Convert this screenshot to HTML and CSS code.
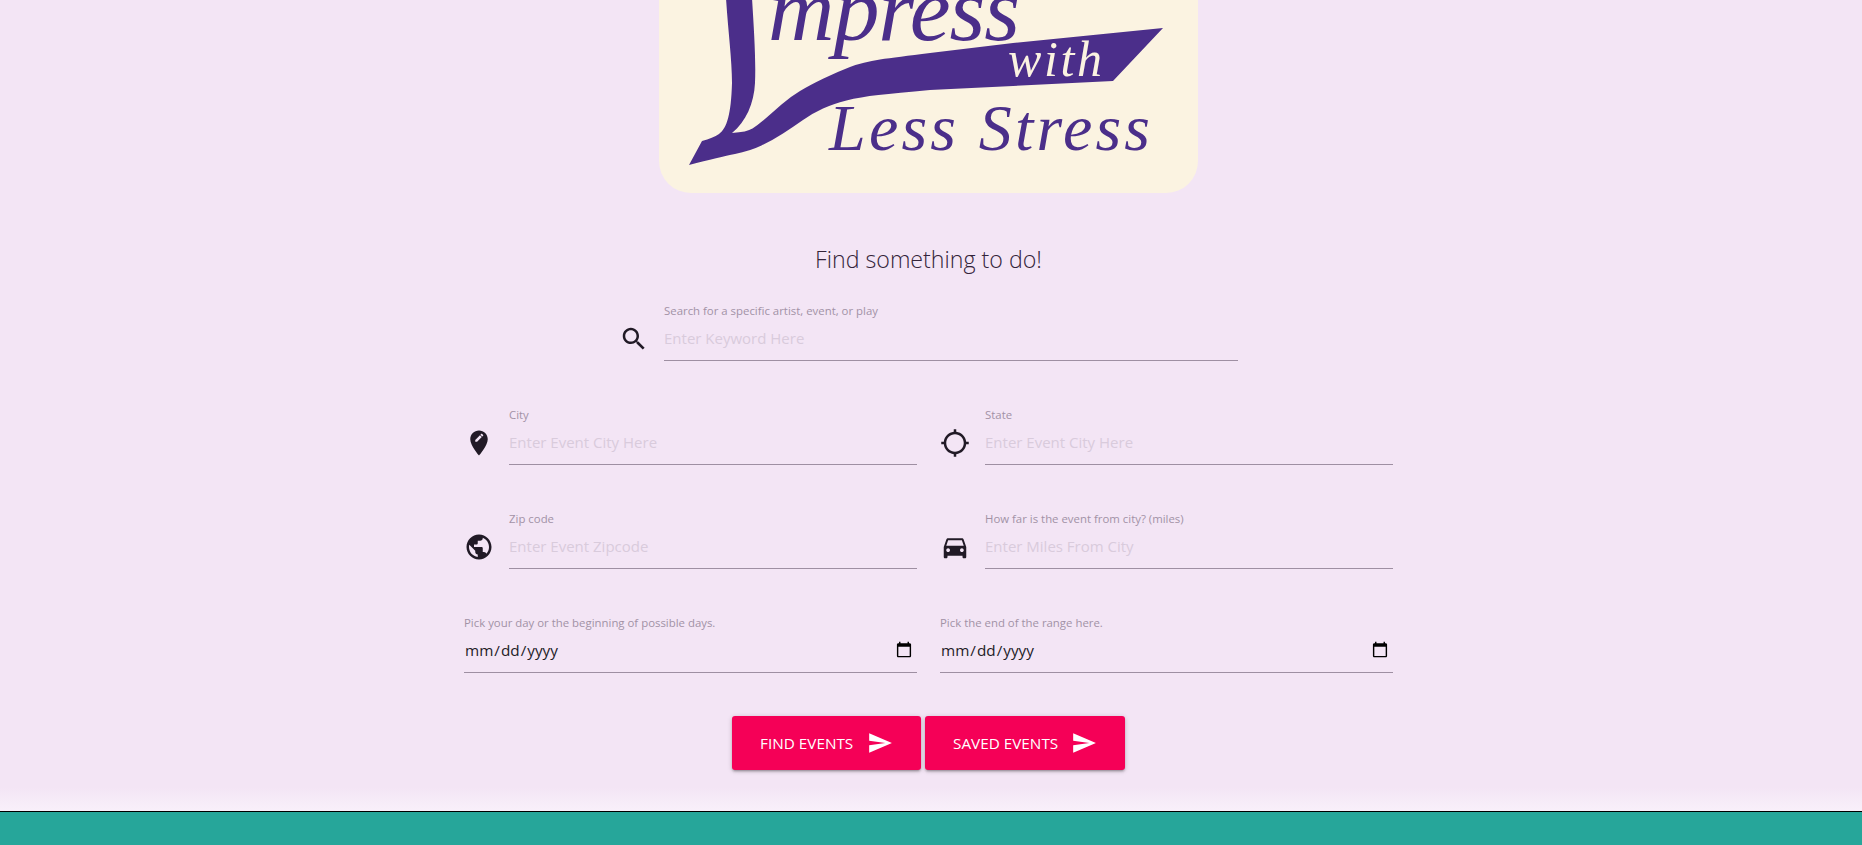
FILE: index.html
```html
<!DOCTYPE html>
<html lang="en">
<head>
<meta charset="utf-8">
<title>Impress with Less Stress</title>
<link rel="stylesheet" href="styles.css">
</head>
<body>
<main class="page">
  <div class="logo">
    <svg class="logo-art" viewBox="0 0 539 193" aria-label="Impress with Less Stress">
      <path class="ink" d="M67 -2 L93 -2 C95 30 97 60 96 83 C95 103 87 122 73 133 Q88 132 93.5 128.5 Q99 125 106.5 118.5 Q114 112 122.5 104.5 Q131 97 141 91 Q151 85 164.5 78.5 Q178 72 191 67 Q204 62 221 59.5 Q238 57 271 53 L354 43 L504 28 L454 81 L354 86 L271 90 Q238 93 219.5 95 Q201 97 187.5 100.5 Q174 104 164 108.5 Q154 113 144 120 Q134 127 124 133.5 Q114 140 102.5 145.5 Q91 151 76 154 Q61 157 30 165 L43 141 Q54 138 60 134 C68 128 72 115 73 83 C73 60 69 30 67 -2 Z"/>
      <text class="logo-text mpress" x="109" y="40" textLength="252">mpress</text>
      <text class="logo-text with" x="349" y="76" textLength="94">with</text>
      <text class="logo-text less" x="170" y="150" textLength="321">Less Stress</text>
    </svg>
  </div>

  <h1 class="title">Find something to do!</h1>

  <form class="form">
    <div class="field field-search">
      <svg class="icon" viewBox="0 0 24 24"><path d="M15.5 14h-.79l-.28-.27C15.41 12.59 16 11.11 16 9.5 16 5.91 13.09 3 9.5 3S3 5.91 3 9.5 5.91 16 9.5 16c1.61 0 3.09-.59 4.23-1.57l.27.28v.79l5 4.99L20.49 19l-4.99-5zm-6 0C7.01 14 5 11.99 5 9.5S7.01 5 9.5 5 14 7.01 14 9.5 11.99 14 9.5 14z"/></svg>
      <label class="control"><span class="label">Search for a specific artist, event, or play</span><input class="input" type="text" placeholder="Enter Keyword Here"></label>
    </div>

    <div class="grid">
      <div class="field">
        <svg class="icon" viewBox="0 0 24 24"><path d="M12 2C8.14 2 5 5.14 5 9c0 5.25 7 13 7 13s7-7.75 7-13c0-3.86-3.14-7-7-7zm-1.53 9H9v-1.47l3.76-3.75 1.47 1.47L10.47 11zm4.85-4.84-.71.71-1.47-1.47.71-.71c.15-.15.39-.15.54 0l.93.93c.15.15.15.39 0 .54z"/></svg>
        <label class="control"><span class="label">City</span><input class="input" type="text" placeholder="Enter Event City Here"></label>
      </div>
      <div class="field">
        <svg class="icon" viewBox="0 0 24 24"><path d="M20.94 11c-.46-4.17-3.77-7.48-7.94-7.94V1h-2v2.06C6.83 3.52 3.52 6.83 3.06 11H1v2h2.06c.46 4.17 3.77 7.48 7.94 7.94V23h2v-2.06c4.17-.46 7.48-3.77 7.94-7.94H23v-2h-2.06zM12 19c-3.87 0-7-3.13-7-7s3.13-7 7-7 7 3.13 7 7-3.13 7-7 7z"/></svg>
        <label class="control"><span class="label">State</span><input class="input" type="text" placeholder="Enter Event City Here"></label>
      </div>
      <div class="field">
        <svg class="icon" viewBox="0 0 24 24"><path d="M12 2C6.48 2 2 6.48 2 12s4.48 10 10 10 10-4.48 10-10S17.52 2 12 2zm-1 17.93c-3.95-.49-7-3.85-7-7.93 0-.62.08-1.21.21-1.79L9 15v1c0 1.1.9 2 2 2v1.93zm6.9-2.54c-.26-.81-1-1.39-1.9-1.39h-1v-3c0-.55-.45-1-1-1H8v-2h2c.55 0 1-.45 1-1V7h2c1.1 0 2-.9 2-2v-.41c2.93 1.19 5 4.06 5 7.41 0 2.08-.8 3.97-2.1 5.39z"/></svg>
        <label class="control"><span class="label">Zip code</span><input class="input" type="text" placeholder="Enter Event Zipcode"></label>
      </div>
      <div class="field">
        <svg class="icon" viewBox="0 0 24 24"><path d="M18.92 6.01C18.72 5.42 18.16 5 17.5 5h-11c-.66 0-1.21.42-1.42 1.01L3 12v8c0 .55.45 1 1 1h1c.55 0 1-.45 1-1v-1h12v1c0 .55.45 1 1 1h1c.55 0 1-.45 1-1v-8l-2.08-5.99zM6.5 16c-.83 0-1.5-.67-1.5-1.5S5.67 13 6.5 13s1.5.67 1.5 1.5S7.33 16 6.5 16zm11 0c-.83 0-1.5-.67-1.5-1.5s.67-1.5 1.5-1.5 1.5.67 1.5 1.5-.67 1.5-1.5 1.5zM5 11l1.5-4.5h11L19 11H5z"/></svg>
        <label class="control"><span class="label">How far is the event from city? (miles)</span><input class="input" type="text" placeholder="Enter Miles From City"></label>
      </div>
      <label class="control"><span class="label">Pick your day or the beginning of possible days.</span><input class="input input-date" type="date"></label>
      <label class="control"><span class="label">Pick the end of the range here.</span><input class="input input-date" type="date"></label>
    </div>

    <div class="actions">
      <button class="btn btn-find" type="button">FIND EVENTS<svg class="btn-icon" viewBox="0 0 24 24"><path d="M2.01 21L23 12 2.01 3 2 10l15 2-15 2z"/></svg></button>
      <button class="btn btn-saved" type="button">SAVED EVENTS<svg class="btn-icon" viewBox="0 0 24 24"><path d="M2.01 21L23 12 2.01 3 2 10l15 2-15 2z"/></svg></button>
    </div>
  </form>
</main>
<footer class="footer"></footer>
</body>
</html>
```
FILE: styles.css
```css
* { box-sizing: border-box; }
html, body { margin: 0; height: 845px; overflow: hidden; }
body {
  font-family: "Open Sans", "Noto Sans", sans-serif;
  background: #f3e5f5;
  display: flex;
  flex-direction: column;
}
.page {
  height: 811px;
  padding-right: 5px;
  background: linear-gradient(#f3e5f5 0, #f3e5f5 787px, #f9f0fa 811px);
}
.logo {
  width: 539px;
  height: 193px;
  margin: 0 auto;
  background: #fbf3e1;
  border-radius: 0 0 32px 32px;
  overflow: hidden;
}
.logo-art { display: block; width: 539px; height: 193px; }
.ink { fill: #4b2e8a; }
.logo-text {
  font-family: "Liberation Serif", serif;
  font-style: italic;
  fill: #4b2e8a;
}
.mpress { font-size: 92px; }
.with { font-size: 50px; fill: #fbf3e1; }
.less { font-size: 66px; }
.title {
  margin: 50px 0 28px;
  font-size: 23.2px;
  line-height: 32px;
  font-weight: 300;
  text-align: center;
  color: #33243a;
}
.form { width: 929px; margin: 0 auto; }
.field {
  display: grid;
  grid-template-columns: 30px 1fr;
  column-gap: 15px;
  align-items: start;
}
.field-search { width: 619px; margin: 0 auto 46px; }
.icon { width: 30px; height: 30px; margin-top: 21px; fill: #211a26; display: block; }
.control { display: block; min-width: 0; }
.label {
  display: block;
  height: 16px;
  font-size: 11.4px;
  line-height: 16px;
  color: #a292a6;
}
.input {
  display: block;
  width: 100%;
  height: 42px;
  padding: 0 0 3px;
  border: 0;
  border-bottom: 1px solid #9e8fa2;
  border-radius: 0;
  background: transparent;
  font-family: inherit;
  font-size: 15px;
  color: #231c27;
  outline: 0;
}
.input::placeholder { color: #d9cbdc; opacity: 1; }
.input-date { font-size: 15.3px; }
.input-date::-webkit-calendar-picker-indicator {
  width: 18px;
  height: 18px;
  padding: 0;
  margin: 0 4px 0 0;
}
.grid {
  display: grid;
  grid-template-columns: 453px 453px;
  column-gap: 23px;
  row-gap: 46px;
}
.actions {
  display: flex;
  justify-content: center;
  gap: 4px;
  margin-top: 43px;
}
.btn {
  display: flex;
  align-items: center;
  justify-content: space-between;
  height: 54px;
  padding: 0 28px;
  border: 0;
  border-radius: 3px;
  background: #f50057;
  color: #fff;
  font-family: inherit;
  font-size: 15.3px;
  box-shadow: 0 2px 2px rgba(0,0,0,.14), 0 3px 1px -2px rgba(0,0,0,.12), 0 1px 5px rgba(0,0,0,.2);
}
.btn-find { width: 189px; }
.btn-saved { width: 200px; }
.btn-icon { width: 26px; height: 26px; fill: #fff; display: block; }
.footer {
  height: 34px;
  flex: none;
  border-top: 1px solid #000;
  background: #26a69a;
}
```
